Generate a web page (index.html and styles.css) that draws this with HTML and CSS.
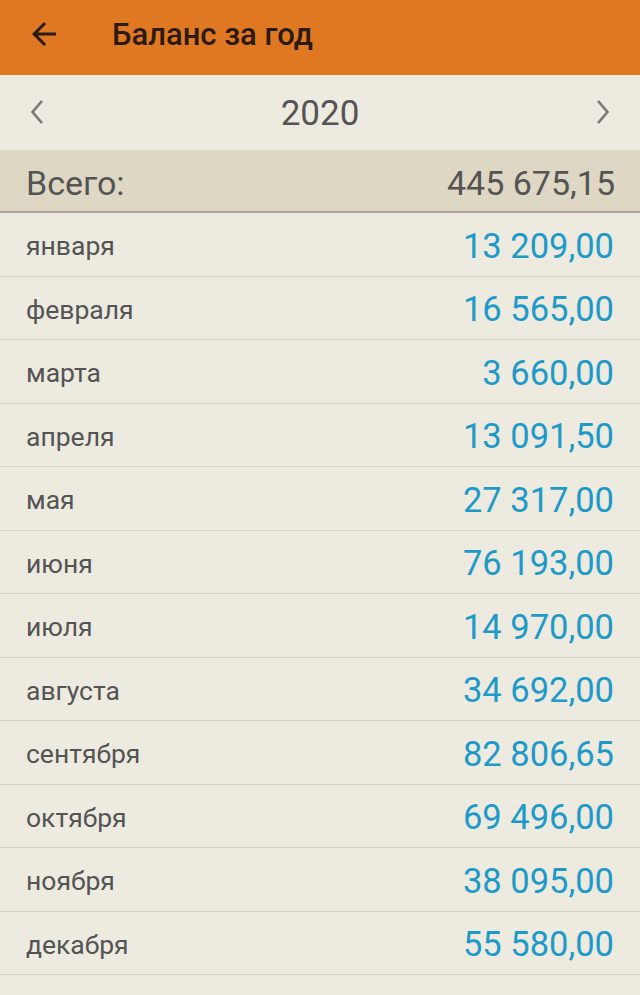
FILE: index.html
```html
<!DOCTYPE html>
<html lang="ru">
<head>
<meta charset="utf-8">
<link rel="stylesheet" href="styles.css">
</head>
<body>
<header class="appbar">
  <svg class="back" viewBox="0 0 24 24" width="36" height="36"><path d="M20 11H7.83l5.59-5.59L12 4l-8 8 8 8 1.41-1.41L7.83 13H20v-2z"/></svg>
  <h1 class="title">Баланс за год</h1>
</header>
<div class="yearbar">
  <svg class="chev" viewBox="0 0 14 26" width="14" height="26"><path d="M12 2 L2.5 13 L12 24"/></svg>
  <span class="year">2020</span>
  <svg class="chev" viewBox="0 0 14 26" width="14" height="26"><path d="M2 2 L11.5 13 L2 24"/></svg>
</div>
<div class="total">
  <span>Всего:</span>
  <span>445 675,15</span>
</div>
<ul class="list">
  <li class="row"><span class="month">января</span><span class="value">13 209,00</span></li>
  <li class="row"><span class="month">февраля</span><span class="value">16 565,00</span></li>
  <li class="row"><span class="month">марта</span><span class="value">3 660,00</span></li>
  <li class="row"><span class="month">апреля</span><span class="value">13 091,50</span></li>
  <li class="row"><span class="month">мая</span><span class="value">27 317,00</span></li>
  <li class="row"><span class="month">июня</span><span class="value">76 193,00</span></li>
  <li class="row"><span class="month">июля</span><span class="value">14 970,00</span></li>
  <li class="row"><span class="month">августа</span><span class="value">34 692,00</span></li>
  <li class="row"><span class="month">сентября</span><span class="value">82 806,65</span></li>
  <li class="row"><span class="month">октября</span><span class="value">69 496,00</span></li>
  <li class="row"><span class="month">ноября</span><span class="value">38 095,00</span></li>
  <li class="row"><span class="month">декабря</span><span class="value">55 580,00</span></li>
</ul>
</body>
</html>
```
FILE: styles.css
```css
html, body {
  margin: 0;
  padding: 0;
  background: #EDEAE0;
  font-family: Roboto, "Noto Sans", sans-serif;
}
.appbar {
  height: 75px;
  background: #E07722;
  display: flex;
  align-items: center;
  box-sizing: border-box;
  padding-left: 26px;
}
.back {
  fill: #2B1A0E;
  flex: none;
  margin-top: -7px;
}
.title {
  margin: -7px 0 0 50px;
  font-size: 31px;
  font-weight: 500;
  color: #2B1A0E;
}
.yearbar {
  height: 75px;
  display: flex;
  align-items: center;
  justify-content: space-between;
  padding: 0 30px;
}
.chev {
  fill: none;
  stroke: #7A7874;
  stroke-width: 2.6;
  margin-top: -1px;
}
.year {
  font-size: 35px;
  color: #545454;
  margin-top: 2px;
}
.total {
  height: 63px;
  box-sizing: border-box;
  padding: 4px 25px 0 26px;
  background: #DDD7C4;
  border-bottom: 2px solid #ABA69D;
  display: flex;
  align-items: center;
  justify-content: space-between;
  font-size: 34px;
  color: #545454;
}
.list {
  list-style: none;
  margin: 0;
  padding: 0;
}
.row {
  height: 59.5px;
  border-bottom: 1px solid #D5D1C7;
  display: flex;
  align-items: center;
  justify-content: space-between;
  padding: 3px 26px 0 26px;
}
.month {
  font-size: 26.5px;
  color: #545454;
}
.value {
  font-size: 34.5px;
  color: #1E9AC9;
}
```
